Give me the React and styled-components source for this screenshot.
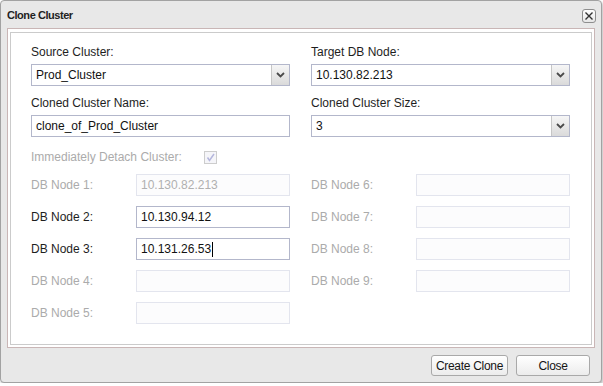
import React from "react";
import styled, { createGlobalStyle } from "styled-components";

const Global = createGlobalStyle`
  html, body { margin: 0; padding: 0; background: #ffffff; }
  body { font-family: "Liberation Sans", Arial, sans-serif; }
  * { box-sizing: border-box; }
`;

const Dialog = styled.div`
  width: 602px;
  height: 383px;
  border: 1px solid #a2a2a2;
  border-radius: 4px;
  background: #e8e8e8;
  box-shadow: 1px 2px 3px rgba(0, 0, 0, 0.28);
  display: flex;
  flex-direction: column;
  overflow: hidden;
`;

const TitleBar = styled.div`
  height: 27px;
  flex: none;
  display: flex;
  align-items: center;
  justify-content: space-between;
  padding: 0 5px 0 6px;
`;

const Title = styled.div`
  font-size: 11px;
  font-weight: bold;
  letter-spacing: -0.45px;
  color: #222;
`;

const CloseX = styled.div`
  width: 14px;
  height: 14px;
  border: 1px solid #8e8e8e;
  border-radius: 3px;
  background: linear-gradient(#ffffff, #e6e6e6);
  display: flex;
  align-items: center;
  justify-content: center;
  margin-top: 2px;
`;

const Panel = styled.div`
  flex: 1;
  margin: 0 6px;
  border: 1px solid #c9b6b6;
  background: #ffffff;
  padding: 3px 2px 2px 2px;
  display: flex;
`;

const Inner = styled.div`
  flex: 1;
  border: 1px solid #cbcbcb;
  padding: 12px 21px 0 20px;
  display: flex;
  flex-direction: column;
`;

const TopGrid = styled.div`
  display: grid;
  grid-template-columns: 259px 259px;
  column-gap: 21px;
  row-gap: 10px;
`;

const Field = styled.div`
  display: flex;
  flex-direction: column;
`;

const Label = styled.div`
  font-size: 12px;
  line-height: 14px;
  color: ${(p) => (p.$disabled ? "#ababab" : "#1e1e1e")};
  margin-bottom: ${(p) => (p.$stacked ? "5px" : "0")};
  white-space: nowrap;
`;

const SelectBox = styled.div`
  height: 22px;
  border: 1px solid #b3b7cb;
  background: #fff;
  display: flex;
  align-items: stretch;
`;

const SelectValue = styled.div`
  flex: 1;
  font-size: 12px;
  color: #111;
  padding-left: 4px;
  display: flex;
  align-items: center;
`;

const SelectArrow = styled.div`
  width: 18px;
  border-left: 1px solid #c6c6c6;
  background: linear-gradient(#f6f6f6, #dadada);
  display: flex;
  align-items: center;
  justify-content: center;
`;

const TextBox = styled.div`
  height: ${(p) => (p.$small ? "22px" : "22px")};
  flex: ${(p) => (p.$grow ? "1" : "none")};
  border: 1px solid ${(p) => (p.$disabled ? "#e3e5ee" : "#b3b7cb")};
  background: ${(p) => (p.$disabled ? "#fcfcfd" : "#fff")};
  color: ${(p) => (p.$disabled ? "#b0b0b0" : "#111")};
  font-size: 12px;
  padding-left: 4px;
  display: flex;
  align-items: center;
`;

const Caret = styled.span`
  display: inline-block;
  width: 1px;
  height: 15px;
  background: #000;
  margin-left: 1px;
`;

const CheckRow = styled.div`
  display: flex;
  align-items: center;
  margin-top: 13px;
  height: 14px;
`;

const CheckBox = styled.div`
  width: 13px;
  height: 13px;
  margin-left: 22px;
  border: 1px solid #cdcdcd;
  background: #f5f5f9;
  display: flex;
  align-items: center;
  justify-content: center;
`;

const NodeGrid = styled.div`
  display: grid;
  grid-template-columns: 259px 259px;
  column-gap: 21px;
  margin-top: 10px;
`;

const NodeColumn = styled.div`
  display: flex;
  flex-direction: column;
  gap: 10px;
`;

const NodeRow = styled.div`
  display: flex;
  align-items: center;
`;

const NodeLabel = styled(Label)`
  width: 105px;
  flex: none;
`;

const Footer = styled.div`
  height: 34px;
  flex: none;
  display: flex;
  justify-content: flex-end;
  align-items: flex-start;
  gap: 8px;
  padding: 7px 11px 0 0;
`;

const Button = styled.div`
  width: ${(p) => p.$w}px;
  height: 21px;
  border: 1px solid #a9a9a9;
  border-radius: 3px;
  background: linear-gradient(#ffffff, #ececec);
  font-size: 12px;
  color: #151515;
  display: flex;
  align-items: center;
  justify-content: center;
  letter-spacing: -0.3px;
`;

const Chevron = () => (
  <svg width="9" height="6" viewBox="0 0 9 6">
    <polyline points="1,1 4.5,4.5 8,1" fill="none" stroke="#4a4a4a" strokeWidth="1.8" />
  </svg>
);

const Select = ({ value }) => (
  <SelectBox>
    <SelectValue>{value}</SelectValue>
    <SelectArrow>
      <Chevron />
    </SelectArrow>
  </SelectBox>
);

const leftNodes = [
  { n: 1, v: "10.130.82.213", d: true },
  { n: 2, v: "10.130.94.12", d: false },
  { n: 3, v: "10.131.26.53", d: false, caret: true },
  { n: 4, v: "", d: true },
  { n: 5, v: "", d: true },
];
const rightNodes = [6, 7, 8, 9].map((n) => ({ n, v: "", d: true }));

const Node = ({ n, v, d, caret }) => (
  <NodeRow>
    <NodeLabel $disabled={d}>DB Node {n}:</NodeLabel>
    <TextBox $grow $disabled={d}>
      {v}
      {caret && <Caret />}
    </TextBox>
  </NodeRow>
);

export default function App() {
  return (
    <>
      <Global />
      <Dialog>
        <TitleBar>
          <Title>Clone Cluster</Title>
          <CloseX>
            <svg width="10" height="10" viewBox="0 0 10 10">
              <path d="M1.5 1.5 L8.5 8.5 M8.5 1.5 L1.5 8.5" stroke="#333" strokeWidth="1.4" />
            </svg>
          </CloseX>
        </TitleBar>
        <Panel>
          <Inner>
            <TopGrid>
              <Field>
                <Label $stacked>Source Cluster:</Label>
                <Select value="Prod_Cluster" />
              </Field>
              <Field>
                <Label $stacked>Target DB Node:</Label>
                <Select value="10.130.82.213" />
              </Field>
              <Field>
                <Label $stacked>Cloned Cluster Name:</Label>
                <TextBox>clone_of_Prod_Cluster</TextBox>
              </Field>
              <Field>
                <Label $stacked>Cloned Cluster Size:</Label>
                <Select value="3" />
              </Field>
            </TopGrid>
            <CheckRow>
              <Label $disabled>Immediately Detach Cluster:</Label>
              <CheckBox>
                <svg width="9" height="9" viewBox="0 0 9 9">
                  <polyline points="1.5,4.5 3.5,7.5 8,1" fill="none" stroke="#b4b6dc" strokeWidth="1.5" />
                </svg>
              </CheckBox>
            </CheckRow>
            <NodeGrid>
              <NodeColumn>
                {leftNodes.map((x) => (
                  <Node key={x.n} {...x} />
                ))}
              </NodeColumn>
              <NodeColumn>
                {rightNodes.map((x) => (
                  <Node key={x.n} {...x} />
                ))}
              </NodeColumn>
            </NodeGrid>
          </Inner>
        </Panel>
        <Footer>
          <Button $w={77}>Create Clone</Button>
          <Button $w={74}>Close</Button>
        </Footer>
      </Dialog>
    </>
  );
}
